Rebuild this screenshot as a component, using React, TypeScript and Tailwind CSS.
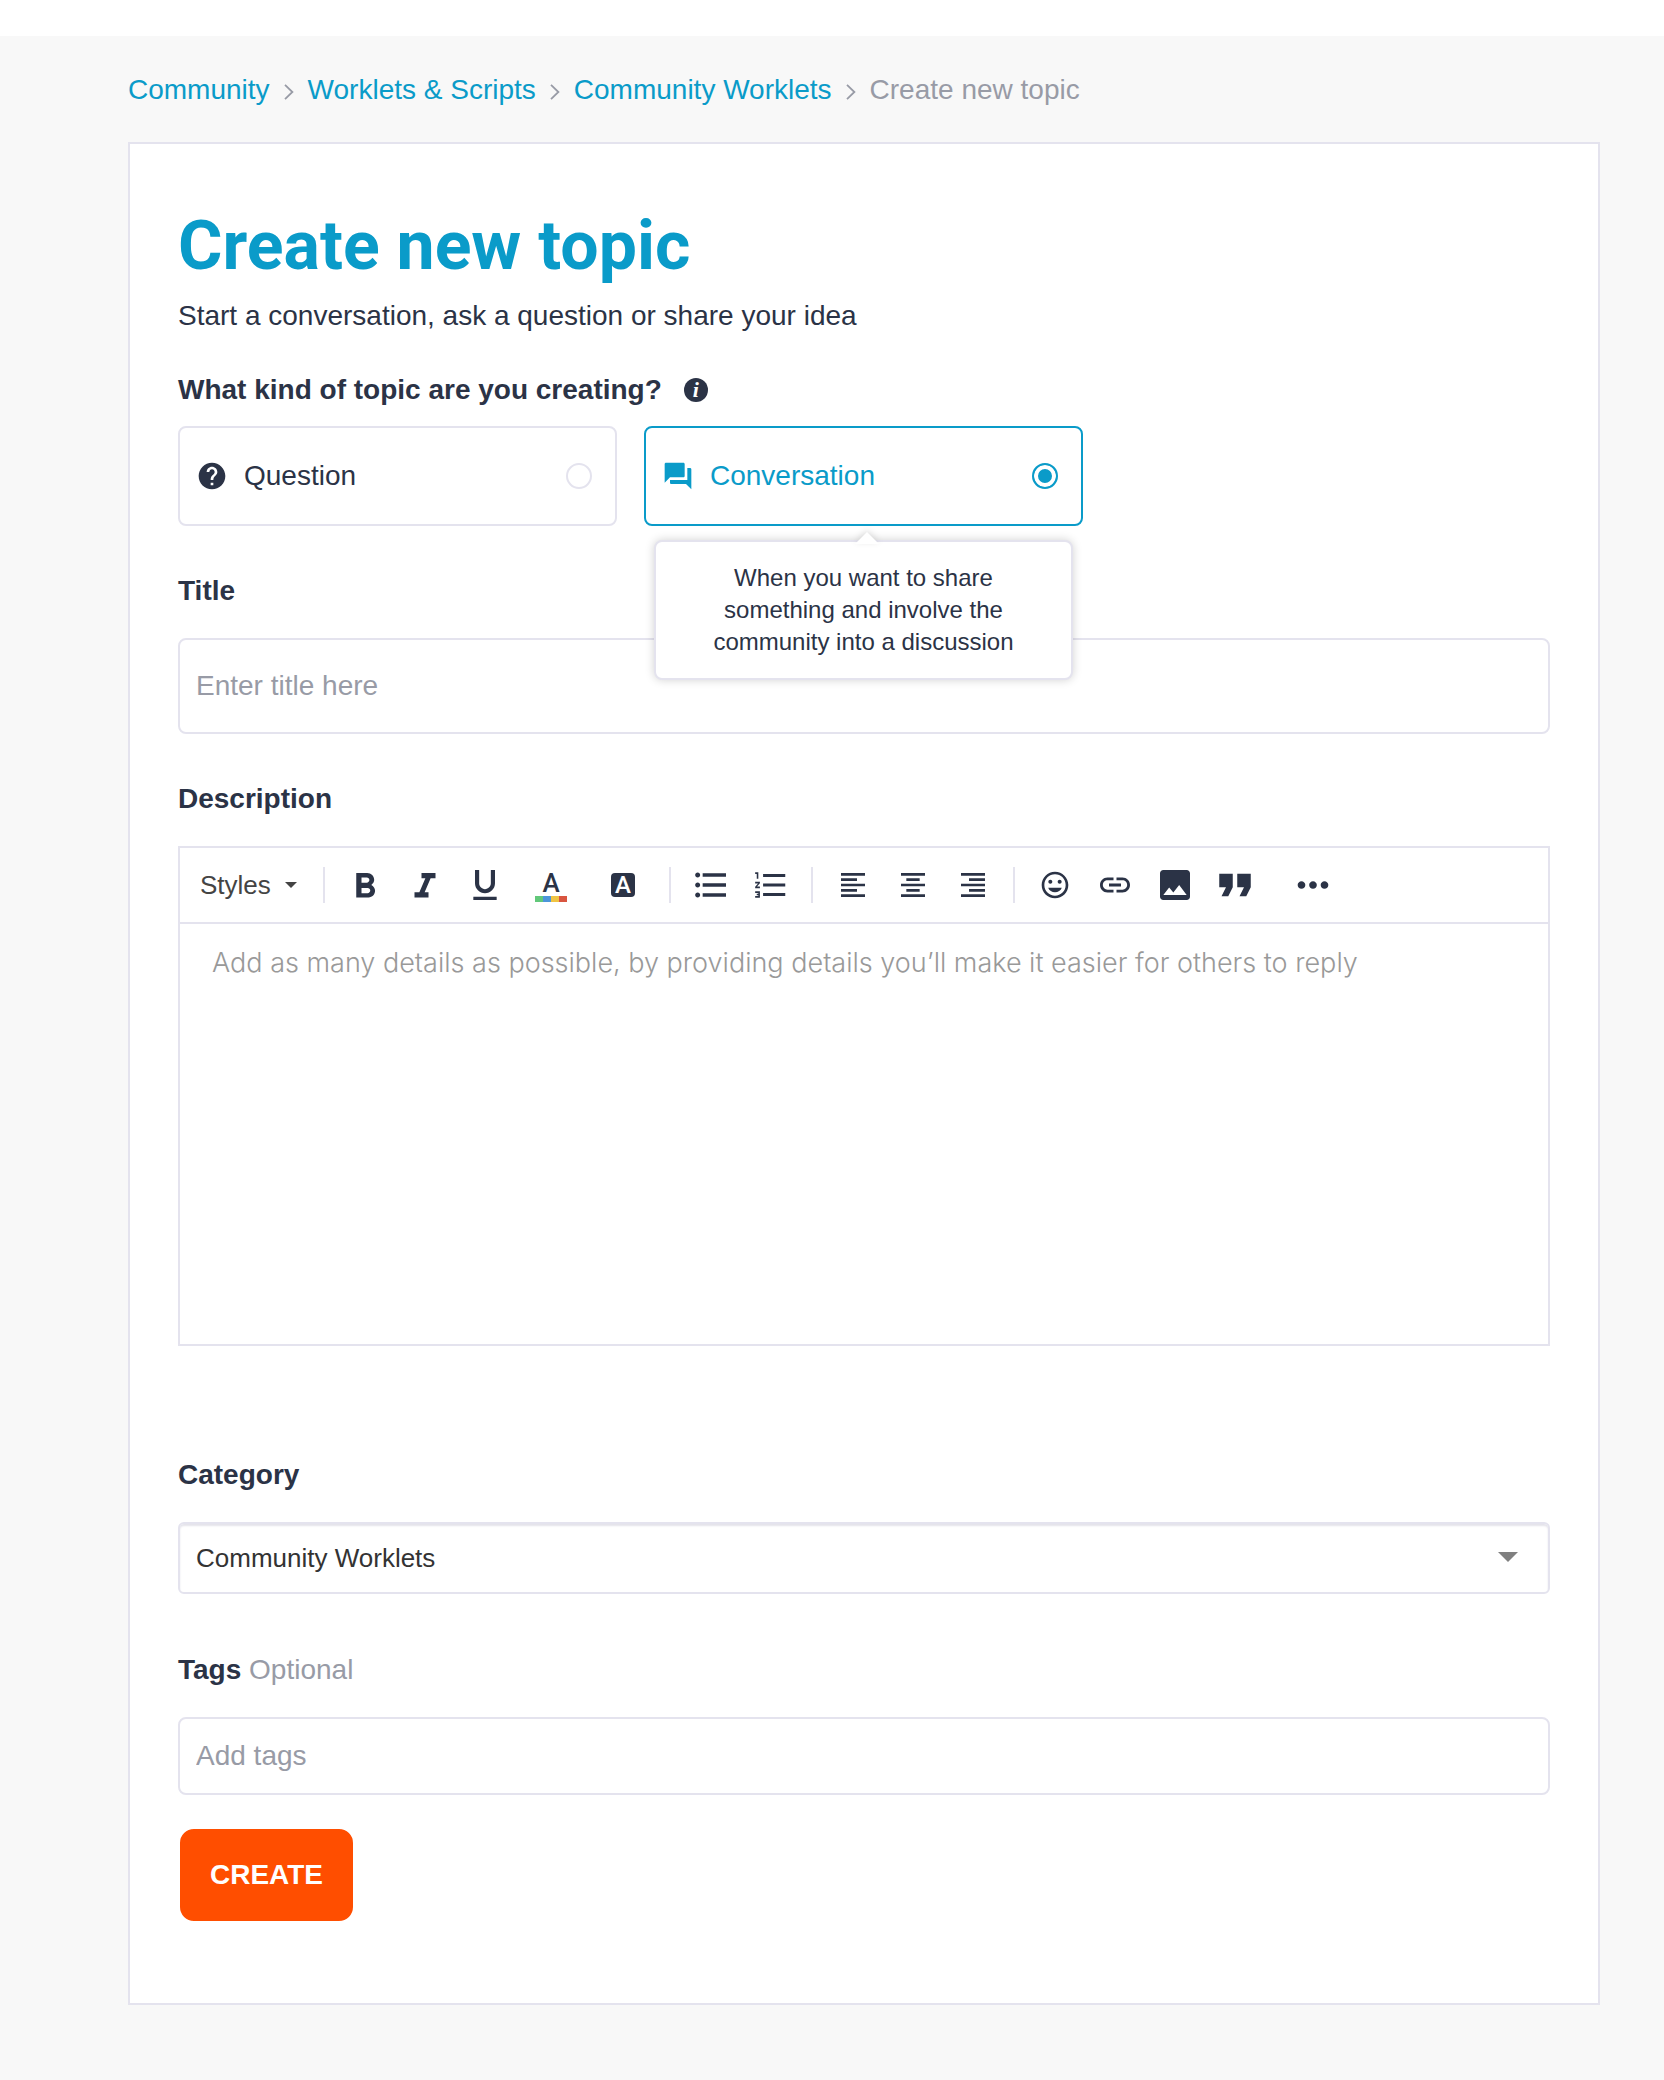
import { useState, type ReactNode } from "react";
import {
  MdFormatAlignCenter,
  MdFormatAlignLeft,
  MdFormatAlignRight,
  MdFormatBold,
  MdFormatItalic,
  MdFormatListBulleted,
  MdFormatListNumbered,
  MdFormatQuote,
  MdFormatUnderlined,
  MdHelp,
  MdImage,
  MdInsertEmoticon,
  MdLink,
  MdMoreHoriz,
  MdQuestionAnswer,
} from "react-icons/md";
import type { IconType } from "react-icons";

type TopicKind = "question" | "conversation";

interface KindOption {
  value: TopicKind;
  label: string;
  icon: IconType;
  hint?: string;
}

const CRUMBS = ["Community", "Worklets & Scripts", "Community Worklets"];

const KINDS: KindOption[] = [
  { value: "question", label: "Question", icon: MdHelp },
  {
    value: "conversation",
    label: "Conversation",
    icon: MdQuestionAnswer,
    hint: "When you want to share something and involve the community into a discussion",
  },
];

function Breadcrumbs() {
  return (
    <nav aria-label="Breadcrumb" className="pt-9 pb-[34px]">
      <ol className="flex flex-wrap items-center gap-[14px]">
        {CRUMBS.map((crumb) => (
          <li key={crumb} className="flex items-center gap-[14px]">
            <a href="#" className="text-[#0a9bc9]">
              {crumb}
            </a>
            <svg viewBox="0 0 10 16" className="mt-1 h-4 w-[10px]" fill="none" stroke="#989ba6" strokeWidth="1.8">
              <path d="M1 .8 8.4 8 1 15.2" />
            </svg>
          </li>
        ))}
        <li aria-current="page" className="text-[#989ba6]">
          Create new topic
        </li>
      </ol>
    </nav>
  );
}

function KindCard({
  option,
  checked,
  onSelect,
}: {
  option: KindOption;
  checked: boolean;
  onSelect: (kind: TopicKind) => void;
}) {
  const Icon = option.icon;

  return (
    <div className="relative w-[439px]">
      <label
        className={`flex h-[100px] items-center gap-4 rounded-lg border-2 pr-[23px] pl-4 ${
          checked ? "border-[#0a9bc9] text-[#0a9bc9]" : "border-[#e4e3ee]"
        }`}
      >
        <Icon size={32} />
        <span className="flex-1">{option.label}</span>
        <input
          type="radio"
          name="kind"
          value={option.value}
          checked={checked}
          onChange={() => onSelect(option.value)}
          className="size-[26px] appearance-none rounded-full border-2 border-[#e4e3ee] bg-white checked:border-[#0a9bc9] checked:bg-[#0a9bc9] checked:shadow-[inset_0_0_0_4px_#fff]"
        />
      </label>
      {checked && option.hint && (
        <div
          role="tooltip"
          className="absolute inset-x-[10px] top-[114px] z-10 rounded-lg border-2 border-[#e4e3ee] bg-white px-8 py-5 text-center text-[24px] leading-8 shadow-[0_0_10px_rgba(0,0,0,0.18)]"
        >
          <svg
            viewBox="0 0 24 12"
            className="absolute -top-[10px] left-1/2 ml-[-9px] h-3 w-6 drop-shadow-[0_-2px_3px_rgba(0,0,0,0.12)]"
          >
            <path d="M12 0 24 12H0z" fill="#fff" />
          </svg>
          {option.hint}
        </div>
      )}
    </div>
  );
}

function ToolButton({ label, className = "w-[60px]", children }: { label: string; className?: string; children: ReactNode }) {
  return (
    <button type="button" aria-label={label} className={`flex h-[74px] items-center justify-center ${className}`}>
      {children}
    </button>
  );
}

function Separator() {
  return <span className="mx-[10px] h-9 w-[2px] bg-[#e4e3ee]" />;
}

function Toolbar() {
  return (
    <div role="toolbar" aria-label="Formatting" className="flex flex-wrap items-center border-b-2 border-[#e4e3ee]">
      <button type="button" className="flex h-[74px] w-[133px] items-center gap-[14px] pl-5 text-[26px] text-[#444]">
        Styles
        <svg viewBox="0 0 12 6" className="h-[6px] w-3" fill="#444">
          <path d="M0 0h12L6 6z" />
        </svg>
      </button>
      <Separator />
      <ToolButton label="Bold">
        <MdFormatBold size={42} className="mt-1" />
      </ToolButton>
      <ToolButton label="Italic">
        <MdFormatItalic size={42} className="mt-1" />
      </ToolButton>
      <ToolButton label="Underline">
        <MdFormatUnderlined size={40} />
      </ToolButton>
      <ToolButton label="Text color" className="w-[72px] flex-col gap-[2px] pt-1">
        <span className="font-[Roboto] text-[26px] leading-[22px] font-medium">A</span>
        <span className="flex">
          <span className="h-[6px] w-2 bg-[#62c87a]" />
          <span className="h-[6px] w-2 bg-[#4d96da]" />
          <span className="h-[6px] w-2 bg-[#efc443]" />
          <span className="h-[6px] w-2 bg-[#d95540]" />
        </span>
      </ToolButton>
      <ToolButton label="Background color" className="w-[72px]">
        <span className="flex size-6 items-center justify-center rounded-[4px] bg-[#2b3346] font-[Roboto] text-[24px] leading-6 font-medium text-white">
          A
        </span>
      </ToolButton>
      <Separator />
      <ToolButton label="Unordered list">
        <MdFormatListBulleted size={40} />
      </ToolButton>
      <ToolButton label="Ordered list">
        <MdFormatListNumbered size={38} />
      </ToolButton>
      <Separator />
      <ToolButton label="Align left">
        <MdFormatAlignLeft size={32} />
      </ToolButton>
      <ToolButton label="Align center">
        <MdFormatAlignCenter size={32} />
      </ToolButton>
      <ToolButton label="Align right">
        <MdFormatAlignRight size={32} />
      </ToolButton>
      <Separator />
      <ToolButton label="Emoticons">
        <MdInsertEmoticon size={32} />
      </ToolButton>
      <ToolButton label="Insert link">
        <MdLink size={36} />
      </ToolButton>
      <ToolButton label="Insert image">
        <MdImage size={40} />
      </ToolButton>
      <ToolButton label="Quote">
        <MdFormatQuote size={54} />
      </ToolButton>
      <ToolButton label="More" className="w-24">
        <MdMoreHoriz size={46} />
      </ToolButton>
    </div>
  );
}

export default function App() {
  const [kind, setKind] = useState<TopicKind>("conversation");

  return (
    <div className="min-h-screen bg-[#f8f8f8] font-['Liberation_Sans',Arial,sans-serif] text-[28px] leading-9 text-[#2b3346]">
      <header className="h-9 bg-white" />
      <div className="pr-16 pb-[75px] pl-32">
        <Breadcrumbs />
        <main className="border-2 border-[#e4e3ee] bg-white px-12 pt-[62px] pb-20">
          <h1 className="font-[Roboto] text-[68px] leading-[80px] font-bold text-[#0a9bc9]">Create new topic</h1>
          <p className="mt-3">Start a conversation, ask a question or share your idea</p>

          <form onSubmit={(event) => event.preventDefault()}>
            <fieldset className="mt-[38px]">
              <legend className="flex items-center gap-[22px] font-bold">
                What kind of topic are you creating?
                <span className="flex size-6 items-center justify-center rounded-full bg-[#2b3346] font-['Liberation_Serif',serif] text-[22px] leading-6 text-white italic">
                  i
                </span>
              </legend>
              <div className="mt-[18px] flex flex-wrap gap-[27px]">
                {KINDS.map((option) => (
                  <KindCard key={option.value} option={option} checked={kind === option.value} onSelect={setKind} />
                ))}
              </div>
            </fieldset>

            <label htmlFor="title" className="mt-[47px] block font-bold">
              Title
            </label>
            <input
              id="title"
              type="text"
              placeholder="Enter title here"
              className="mt-[29px] block h-24 w-full rounded-lg border-2 border-[#e4e3ee] bg-white px-4 placeholder:text-[#989ba6]"
            />

            <label htmlFor="description" className="mt-[47px] block font-bold">
              Description
            </label>
            <div className="mt-[29px] border-2 border-[#e4e3ee]">
              <Toolbar />
              <textarea
                id="description"
                placeholder="Add as many details as possible, by providing details you’ll make it easier for others to reply"
                className="block h-[420px] w-full resize-none px-8 py-[21px] font-[Inter,sans-serif] text-[27px] font-light placeholder:text-[#999]"
              />
            </div>

            <label htmlFor="category" className="mt-[111px] block font-bold">
              Category
            </label>
            <div className="relative mt-[29px]">
              <select
                id="category"
                className="block h-[72px] w-full appearance-none rounded-md border-2 border-[#e4e3ee] bg-white px-4 text-[26px] text-[#333] shadow-[inset_0_2px_2px_#e4e3ea]"
              >
                <option>Community Worklets</option>
              </select>
              <svg
                viewBox="0 0 20 10"
                className="pointer-events-none absolute top-[30px] right-8 h-[10px] w-5"
                fill="#808080"
              >
                <path d="M0 0h20L10 10z" />
              </svg>
            </div>

            <label htmlFor="tags" className="mt-[58px] block font-bold">
              Tags <span className="font-normal text-[#989ba6]">Optional</span>
            </label>
            <input
              id="tags"
              type="text"
              placeholder="Add tags"
              className="mt-[29px] block h-[78px] w-full rounded-lg border-2 border-[#e4e3ee] bg-white px-4 placeholder:text-[#989ba6]"
            />

            <button
              type="submit"
              className="mt-8 block h-24 rounded-2xl border-2 border-white bg-[#ff4e00] px-[30px] font-bold text-white uppercase"
            >
              Create
            </button>
          </form>
        </main>
      </div>
    </div>
  );
}
